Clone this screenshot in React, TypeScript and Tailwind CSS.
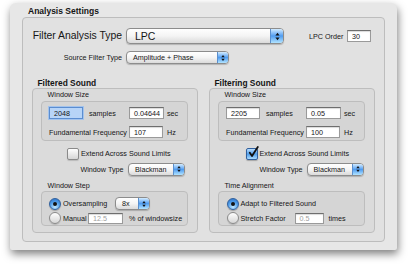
import type { ReactNode } from "react";

const groupBox = "rounded-[4px] border border-[#bdbdbd] bg-black/[0.025]";

function Arrows({ big }: { big?: boolean }) {
  return (
    <svg width={big ? 5 : 4} height={big ? 9 : 8} viewBox="0 0 5 9" aria-hidden="true">
      <path d="M2.5 0.8L4.6 3.6H0.4z" fill="#111" />
      <path d="M2.5 8.2L4.6 5.4H0.4z" fill="#111" />
    </svg>
  );
}

function Popup({
  label,
  className,
  big,
}: {
  label: string;
  className: string;
  big?: boolean;
}) {
  return (
    <div
      className={`flex shrink-0 items-stretch rounded-[4px] border border-[#8c8c8c] bg-linear-to-b from-white via-[#f4f4f4] to-[#dadada] shadow-[0_1px_1px_rgba(0,0,0,0.2)] ${className}`}
    >
      <span
        className={
          big
            ? "flex-1 truncate pl-[8px] text-[10.5px] leading-[14px]"
            : "flex-1 truncate pl-[6px] leading-[11px]"
        }
      >
        {label}
      </span>
      <span
        className={`flex items-center justify-center rounded-r-[3px] border-l border-[#5b8fcd] bg-linear-to-b from-[#d3ecff] via-[#4f9cf0] to-[#b2e4ff] ${
          big ? "w-[13px]" : "w-[11px]"
        }`}
      >
        <Arrows big={big} />
      </span>
    </div>
  );
}

function Field({
  value,
  className,
  focus,
  off,
}: {
  value: string;
  className: string;
  focus?: boolean;
  off?: boolean;
}) {
  let look =
    "border-[#9a9a9a] border-t-[#6e6e6e] bg-white shadow-[inset_0_1px_1px_rgba(0,0,0,0.15)]";
  if (focus) look = "border-[#5b8dd0] bg-[#b7d4f7] shadow-[0_0_0_1px_#a3c3ec]";
  return (
    <div
      className={`flex shrink-0 items-center border pl-[4px] ${look} ${
        off ? "text-[#a0a0a0]" : ""
      } ${className}`}
    >
      {value}
    </div>
  );
}

function Radio({ on }: { on?: boolean }) {
  if (on) {
    return (
      <span className="flex h-[12px] w-[12px] shrink-0 items-center justify-center rounded-full border border-[#30609e] bg-[radial-gradient(circle_at_50%_80%,#c2e8ff_0%,#4d9be8_55%,#2b6cc0_100%)] shadow-[0_1px_1px_rgba(0,0,0,0.25)]">
        <span className="h-[4px] w-[4px] rounded-full bg-[#121212]" />
      </span>
    );
  }
  return (
    <span className="h-[12px] w-[12px] shrink-0 rounded-full border border-[#8a8a8a] bg-linear-to-b from-[#fefefe] to-[#d6d6d6] shadow-[0_1px_1px_rgba(0,0,0,0.15)]" />
  );
}

function Check({ on }: { on?: boolean }) {
  if (!on) {
    return (
      <span className="h-[12px] w-[12px] shrink-0 rounded-[2px] border border-[#8a8a8a] bg-linear-to-b from-[#fefefe] to-[#d6d6d6] shadow-[0_1px_1px_rgba(0,0,0,0.15)]" />
    );
  }
  return (
    <span className="relative h-[12px] w-[12px] shrink-0 rounded-[2px] border border-[#30609e] bg-linear-to-b from-[#b9defe] via-[#4d9be8] to-[#a9dcff] shadow-[0_1px_1px_rgba(0,0,0,0.25)]">
      <svg
        className="absolute -top-[3px] left-[1px]"
        width="11"
        height="12"
        viewBox="0 0 11 12"
        aria-hidden="true"
      >
        <path
          d="M1.8 6.8L4 10L9.8 1"
          fill="none"
          stroke="#111"
          strokeWidth="1.8"
          strokeLinecap="round"
          strokeLinejoin="round"
        />
      </svg>
    </span>
  );
}

function SoundColumn({
  title,
  samples,
  seconds,
  freq,
  focused,
  extend,
  typeLabel,
  typePad,
  checkPad,
  bottomTitle,
  children,
}: {
  title: string;
  samples: string;
  seconds: string;
  freq: string;
  focused?: boolean;
  extend?: boolean;
  typeLabel: string;
  typePad: string;
  checkPad: string;
  bottomTitle: string;
  children: ReactNode;
}) {
  return (
    <div className="flex w-[166px] flex-col">
      <div className="h-[10px] pl-[6px] text-[8.4px] font-bold leading-[10px]">{title}</div>
      <div className={`flex h-[145px] flex-col ${groupBox}`}>
        <div className="h-[10px] pl-[15px] pt-[1px]">Window Size</div>
        <div className={`ml-[8px] mt-[2px] flex h-[40px] w-[147px] flex-col pl-[7.5px] pt-[5px] ${groupBox}`}>
          <div className="flex h-[12px] items-center">
            <Field value={samples} focus={focused} className="h-[12px] w-[34px]" />
            <span className="w-[46px] pl-[6px]">samples</span>
            <Field value={seconds} className="h-[12px] w-[35px]" />
            <span className="pl-[3px]">sec</span>
          </div>
          <div className="mt-[7px] flex h-[12px] items-center">
            <span className="w-[80px]">Fundamental Frequency</span>
            <Field value={freq} className="h-[12px] w-[34px]" />
            <span className="pl-[4px]">Hz</span>
          </div>
        </div>
        <div className={`mt-[6px] flex h-[13px] items-center ${checkPad}`}>
          <Check on={extend} />
          <span className="pl-[2px]">Extend Across Sound Limits</span>
        </div>
        <div className="mt-[3px] flex h-[12px] items-center">
          <span className={`text-right ${typeLabel}`}>Window Type</span>
          <Popup label="Blackman" className={`h-[13px] w-[57px] ${typePad}`} />
        </div>
        <div className="mt-[6px] h-[9px] pl-[15px]">{bottomTitle}</div>
        <div className={`ml-[8px] mt-[1px] flex h-[35px] w-[147px] flex-col ${groupBox}`}>
          {children}
        </div>
      </div>
    </div>
  );
}

export default function App() {
  return (
    <div className="h-[269px] w-[408px] overflow-hidden bg-white pl-[10px] pt-[3px] font-['Liberation_Sans',Arial,sans-serif] text-[7.2px] leading-[9px] text-[#151515]">
      <div className="flex h-[247px] w-[387px] flex-col rounded-t-[6px] rounded-b-[2px] bg-[#e7e7e7] pl-[12px] shadow-[1px_4px_9px_rgba(0,0,0,0.5)]">
        <div className="h-[14px] pl-[6px] pt-[3px] text-[8.5px] font-bold leading-[10px]">
          Analysis Settings
        </div>
        <div className={`flex h-[225px] w-[363px] flex-col ${groupBox}`}>
          {/* filter type */}
          <div className="mt-[10px] flex h-[16px] items-center">
            <span className="w-[99px] text-right text-[10.4px] leading-[12px]">
              Filter Analysis Type
            </span>
            <Popup big label="LPC" className="ml-[4px] h-[16px] w-[158px]" />
            <span className="ml-[25px] w-[38px]">LPC Order</span>
            <Field value="30" className="h-[12px] w-[24px]" />
          </div>
          <div className="mt-[7px] flex h-[13px] items-center">
            <span className="w-[99px] text-right">Source Filter Type</span>
            <Popup label="Amplitude + Phase" className="ml-[4px] h-[13px] w-[103px]" />
          </div>

          <div className="mt-[14px] flex gap-[11px] pl-[8.5px]">
            <SoundColumn
              title="Filtered Sound"
              samples="2048"
              seconds="0.04644"
              freq="107"
              focused
              typeLabel="w-[91px]"
              typePad="ml-[4.5px]"
              checkPad="pl-[34.5px]"
              bottomTitle="Window Step"
            >
              <div className="mt-[5px] flex h-[13px] items-center pl-[7.5px]">
                <Radio on />
                <span className="ml-[2px] w-[52px]">Oversampling</span>
                <Popup label="8x" className="h-[13px] w-[35px]" />
              </div>
              <div className="mt-[2px] flex h-[12px] items-center pl-[7.5px]">
                <Radio />
                <span className="ml-[2px] w-[25px]">Manual</span>
                <Field value="12.5" off className="h-[11px] w-[35px]" />
                <span className="pl-[6px]">% of windowsize</span>
              </div>
            </SoundColumn>

            <SoundColumn
              title="Filtering Sound"
              samples="2205"
              seconds="0.05"
              freq="100"
              extend
              typeLabel="w-[93px]"
              typePad="ml-[4px]"
              checkPad="pl-[36px]"
              bottomTitle="Time Alignment"
            >
              <div className="mt-[5px] flex h-[13px] items-center pl-[8px]">
                <Radio on />
                <span className="ml-[2px]">Adapt to Filtered Sound</span>
              </div>
              <div className="mt-[2px] flex h-[12px] items-center pl-[8px]">
                <Radio />
                <span className="ml-[2px] w-[54px]">Stretch Factor</span>
                <Field value="0.5" off className="h-[11px] w-[29px]" />
                <span className="pl-[5px]">times</span>
              </div>
            </SoundColumn>
          </div>
        </div>
      </div>
    </div>
  );
}
